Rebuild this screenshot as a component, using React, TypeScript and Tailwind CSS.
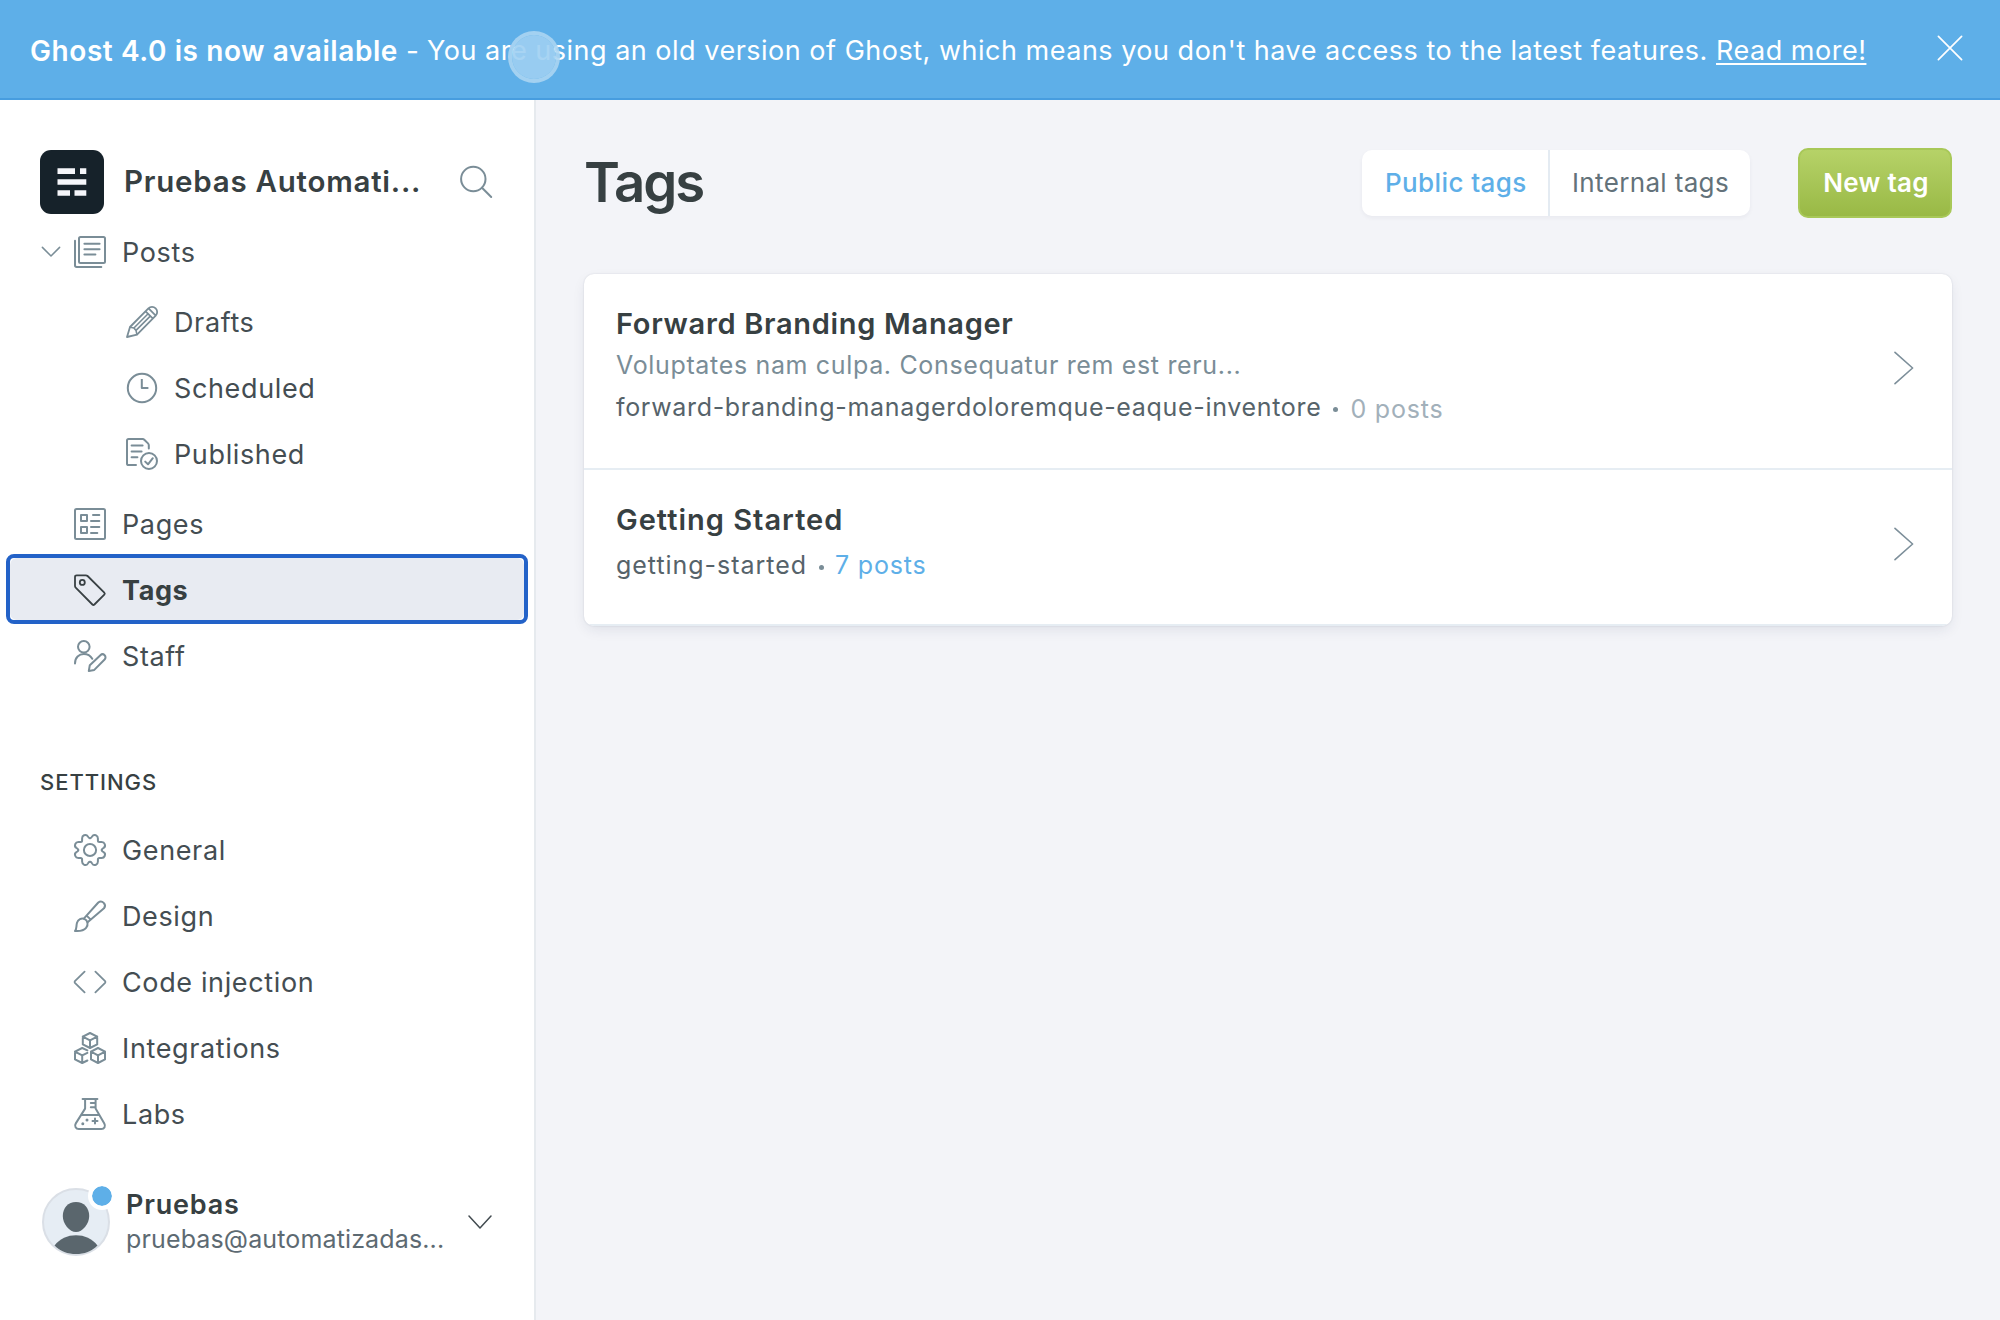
import type { ReactNode } from "react";
import clsx from "clsx";

function Icon({ children, className }: { children: ReactNode; className?: string }) {
  return (
    <svg
      viewBox="0 0 32 32"
      className={clsx("size-8 shrink-0 overflow-visible", className)}
      fill="none"
      stroke="currentColor"
      strokeWidth="2"
      strokeLinecap="round"
      strokeLinejoin="round"
    >
      {children}
    </svg>
  );
}

const gearQuarter =
  "M16 4.3C17.2 4.3 17.7 3.4 18.2 2.4C19 0.9 20.5 0.7 22 1.3C23.6 2 23.9 3 23.9 4.4V6.6Q23.9 8.1 25.4 8.1H27.6C29 8.1 30.1 8.4 30.7 10C31.3 11.5 31.1 13 29.6 13.8C28.6 14.3 27.7 14.8 27.7 16";

const icons = {
  posts: (
    <Icon>
      <rect x="5" y="1" width="26" height="26" rx="1.5" />
      <path d="M1 4.8V29.3Q1 31 2.7 31H27.3M10.4 7.8H25.6M10.4 13.2H25.6M10.4 18.4H21.4" />
    </Icon>
  ),
  drafts: (
    <Icon>
      <path d="M1 31L4 21L22.4 2.4A5 5 0 0 1 29.7 9.6L11 28.6ZM22.8 2.6L29.5 9.3M19.6 5.4L26.7 12.4" strokeWidth="1.8" />
      <path d="M4.2 21.2L7.9 22L10 24.4L10.9 28.4M7.9 22L21.6 8.2M10 24.4L24 10.4" strokeWidth="1.6" />
    </Icon>
  ),
  scheduled: (
    <Icon>
      <circle cx="16" cy="16" r="14.2" />
      <path d="M15.8 7V16H22.4" strokeLinecap="butt" />
    </Icon>
  ),
  published: (
    <Icon>
      <path d="M10 27H2.6Q1 27 1 25.4V2.6Q1 1 2.6 1H16.8Q17.6 1 18.3 1.7L22 5.4Q22.8 6.2 22.8 7.2V10.6M5.6 7.4H16.6M5.6 13.4H15.6M5.6 19.3H11.4" />
      <circle cx="23" cy="23" r="8" />
      <path d="M19.2 23.6L22 26.3L26.8 20.2" />
    </Icon>
  ),
  pages: (
    <Icon>
      <rect x="1" y="1" width="30" height="30" rx="1.5" />
      <path d="M7 7H13V13H7ZM7 19H13V25H7ZM19 7H25.3M17 13H25.3M17 19H25.3M17 25H23.3" />
    </Icon>
  ),
  tags: (
    <Icon className="text-[#394144]">
      <path d="M1 3Q1 1.3 2.7 1.3H11.8Q12.8 1.3 13.6 2L30.3 18.7Q31.3 19.7 30.3 20.7L20.4 30.5Q19.4 31.5 18.4 30.5L1.7 13.7Q1 13 1 12Z" strokeWidth="1.8" />
      <circle cx="8.3" cy="8.4" r="2.5" strokeWidth="1.8" />
    </Icon>
  ),
  staff: (
    <Icon>
      <circle cx="9.8" cy="6.8" r="5.8" />
      <path d="M1 23.4C1 17.4 5 14 9.8 14C13.4 14 16.6 15.9 18.3 18.8M14.8 31L15.8 25.2L26.4 15.2A3 3 0 0 1 30.6 19.5L20.3 29.9Z" />
    </Icon>
  ),
  general: (
    <Icon>
      <path d={gearQuarter} />
      <path d={gearQuarter} transform="rotate(90 16 16)" />
      <path d={gearQuarter} transform="rotate(180 16 16)" />
      <path d={gearQuarter} transform="rotate(270 16 16)" />
      <circle cx="16" cy="16" r="6.1" />
    </Icon>
  ),
  design: (
    <Icon>
      <path d="M1 31C2.9 29 2 26.3 3 22.8C4 19.4 7.5 17.8 10.3 18.9C13.9 20.4 14.6 24.9 12.1 27.9C9.6 30.9 5 31.3 1 31Z" />
      <path d="M9.8 18.6L24.3 2.5A4.1 4.1 0 0 1 30 8.3L13.6 22.2M12.6 15.6L16.8 19.6" />
    </Icon>
  ),
  code: (
    <Icon>
      <path d="M10.6 5.7L0.9 15.1Q0.2 16 0.9 16.9L10.6 26.3M21.4 5.7L31.1 15.1Q31.8 16 31.1 16.9L21.4 26.3" strokeWidth="1.8" />
    </Icon>
  ),
  integrations: (
    <Icon>
      <path d="M16 1L23.2 4.6V12.4L16 16L8.8 12.4V4.6ZM8.8 4.6L16 8.4L23.2 4.6M16 8.4V16" />
      <path d="M13.4 18.3L8.2 16L1 19.6V27.4L8.2 31L13.4 28.5M1 19.6L8.2 23.4L13.4 20.9M8.2 23.4V31" />
      <path d="M24 16L31 19.6V27.4L24 31L17 27.4V19.6ZM17 19.6L24 23.4L31 19.6M24 23.4V31" />
    </Icon>
  ),
  labs: (
    <Icon>
      <path d="M8.6 1H23.4M11.1 1V10.6L1.8 25.4C0.1 28.2 1.9 31 4.8 31H27.4C30.4 31 31.9 28.2 30.3 25.4L21.6 10.6V1M7.6 16.9H25M21.4 5H16.8M21.4 9.2H16.8M21 20.6V25.6M18.5 23.1H23.5" />
      <path d="M13 22V22.02M8.8 25.8V25.82" strokeWidth="3" />
    </Icon>
  ),
};

function NavItem({ icon, label, nested }: { icon: keyof typeof icons; label: string; nested?: boolean }) {
  return (
    <a className={clsx("flex h-[66px] items-center text-[#7a8d97]", nested ? "pl-[126px]" : "pl-[74px]")}>
      {icons[icon]}
      <span className="ml-4 text-[27px] leading-none tracking-[0.63px] text-[#444d52]">{label}</span>
    </a>
  );
}

function ActiveNavItem({ icon, label }: { icon: keyof typeof icons; label: string }) {
  return (
    <a className="mx-1.5 -mt-[3px] -mb-px flex h-[70px] rounded-[8px] border-4 border-[#2362c8] bg-white">
      <span className="flex grow items-center rounded-[7px] bg-[#e8ebf2] pt-0.5 pl-16">
        {icons[icon]}
        <span className="ml-4 text-[27px] font-bold leading-none tracking-[0.6px] text-[#374042]">{label}</span>
      </span>
    </a>
  );
}

function Chevron() {
  return (
    <svg viewBox="0 0 20 34" className="h-[34px] w-5 shrink-0" fill="none" stroke="#7d8f9a" strokeWidth="1.6" strokeLinecap="round" strokeLinejoin="round">
      <path d="M1 1.4L18.6 17L1 32.6" />
    </svg>
  );
}

function Banner() {
  return (
    <header className="relative flex h-[100px] shrink-0 items-center justify-between border-b-2 border-[#479ddf] bg-[#5eafe8] pr-[37px] pl-[30px] text-white">
      <p className="flex pt-[3px] text-[28px] leading-[40px] whitespace-pre">
        <b className="w-[376px] font-semibold tracking-[0.58px]">Ghost 4.0 is now available</b>
        <span className="w-[21px]">-</span>
        <span className="text-[27px] tracking-[0.505px]">
          You are using an old version of Ghost, which means you don't have access to the latest features.{" "}
          <a className="underline decoration-2 underline-offset-[3px]">Read more!</a>
        </span>
      </p>
      <svg viewBox="0 0 26 26" className="mb-0.5 size-[26px]" fill="none" stroke="white" strokeWidth="1.7" strokeLinecap="round">
        <path d="M1.4 1.4L24.6 24.6M24.6 1.4L1.4 24.6" />
      </svg>
      <span className="absolute top-[31px] left-[508px] size-[52px] rounded-full border-4 border-[#abd5f2]/90 bg-[#9fcff2]/90 bg-clip-padding" />
    </header>
  );
}

function Sidebar() {
  return (
    <aside className="flex w-[536px] shrink-0 flex-col border-r-2 border-[#e6eaee] bg-white">
      <div className="mt-[50px] flex h-16 items-center pr-[42px] pl-10">
        <svg viewBox="0 0 64 64" className="size-16 shrink-0">
          <rect width="64" height="64" rx="11" fill="#16222a" />
          <path fill="#f5f6fa" d="M17.5 18.3H35v5.6H17.5zM40 18.3h6.3v5.6H40zM17.5 29.2h28.8v5.6H17.5zM17.5 40.2H30v5.6H17.5zM34.5 40.2h11.8v5.6H34.5z" />
        </svg>
        <h2 className="ml-5 grow pb-0.5 text-[29.5px] font-semibold tracking-[0.75px] whitespace-nowrap text-[#374042]">Pruebas Automati...</h2>
        <Icon className="text-[#7a8d97]">
          <circle cx="13.3" cy="13" r="12.2" />
          <path d="M22 21.8L31.2 31" />
        </Icon>
      </div>

      <nav className="mt-[5px]">
        <div className="flex items-center">
          <svg viewBox="0 0 20 12" className="-mr-[61px] ml-[41px] h-3 w-5 shrink-0" fill="none" stroke="#7a8d97" strokeWidth="1.5" strokeLinecap="round" strokeLinejoin="round">
            <path d="M1.4 1.4L10 10L18.6 1.4" />
          </svg>
          <NavItem icon="posts" label="Posts" />
        </div>
        <div className="my-1">
          <NavItem nested icon="drafts" label="Drafts" />
          <NavItem nested icon="scheduled" label="Scheduled" />
          <NavItem nested icon="published" label="Published" />
        </div>
        <NavItem icon="pages" label="Pages" />
        <ActiveNavItem icon="tags" label="Tags" />
        <NavItem icon="staff" label="Staff" />
      </nav>

      <h3 className="mt-[78px] pl-10 text-[22px] leading-[30px] font-medium tracking-[0.95px] text-[#374042]">SETTINGS</h3>
      <nav className="mt-5">
        <NavItem icon="general" label="General" />
        <NavItem icon="design" label="Design" />
        <NavItem icon="code" label="Code injection" />
        <NavItem icon="integrations" label="Integrations" />
        <NavItem icon="labs" label="Labs" />
      </nav>

      <div className="mt-[41px] flex h-[68px] items-center pl-[42px]">
        <div className="relative size-[68px] shrink-0">
          <svg viewBox="0 0 68 68" className="size-[68px]">
            <circle cx="34" cy="34" r="33" fill="#e6edf4" stroke="#dadfe6" strokeWidth="2" />
            <path d="M34 14C42 14 47.200 20 47.200 28C47.200 36 40.500 44 34 44S20.800 36 20.800 28C20.800 20 26 14 34 14Z" fill="#5a666d" />
            <path d="M12.500 57.500C18 50.500 25.500 47.300 34 47.300S50 50.500 55.500 57.500C50 63.500 42 66 34 66S18 63.500 12.500 57.500Z" fill="#5a666d" />
          </svg>
          <span className="absolute -top-1.5 -right-1.5 size-7 rounded-full border-4 border-white bg-[#5eafe8] bg-clip-padding" />
        </div>
        <div className="ml-4 w-[342px] pb-0.5 whitespace-nowrap">
          <div className="text-[27px] leading-[36px] font-semibold tracking-[0.8px] text-[#374042]">Pruebas</div>
          <div className="-mt-px text-[25px] leading-[34px] tracking-[0.14px] text-[#5d6a72]">pruebas@automatizadas...</div>
        </div>
        <svg viewBox="0 0 24 14" className="h-3.5 w-6" fill="none" stroke="#424b50" strokeWidth="1.5" strokeLinecap="round" strokeLinejoin="round">
          <path d="M1 1L12 13L23 1" />
        </svg>
      </div>
    </aside>
  );
}

export default function App() {
  return (
    <div className="flex h-[1320px] w-[2000px] flex-col overflow-hidden bg-[#f3f4f8] font-['Inter',sans-serif]">
      <Banner />
      <div className="flex grow">
        <Sidebar />
        <main className="grow px-12">
          <div className="mt-12 flex h-[70px] items-center">
            <h1 className="grow pb-px text-[54.5px] leading-none font-semibold tracking-[-2px] text-[#374042]">Tags</h1>
            <div className="flex h-[66px] rounded-[10px] bg-white text-[26px] leading-[66px] shadow-[0_2px_4px_rgba(30,40,80,0.05)]">
              <button className="w-[188px] border-r-2 border-[#e4ebf2] pl-[23px] text-left font-medium tracking-[0.4px] text-[#5eafe8]">Public tags</button>
              <button className="w-[200px] pl-[22px] text-left tracking-[0.35px] text-[#63727a]">Internal tags</button>
            </div>
            <button className="ml-12 h-[70px] w-[154px] rounded-[10px] border-2 border-[#a8c858] bg-linear-to-b from-[#b6d268] to-[#99b945] pb-px pl-0.5 text-center text-[26px] font-semibold tracking-[0.25px] text-white">
              New tag
            </button>
          </div>

          <ul className="mt-14 overflow-hidden rounded-[10px] bg-white text-[25px] shadow-[0_0_2px_rgba(30,40,80,0.14),0_5px_14px_-2px_rgba(30,40,80,0.1)]">
            <li className="flex h-[196px] justify-between border-b-2 border-[#e6edf3] pr-[38px] pl-8">
              <div className="pt-[30px]">
                <h3 className="text-[29px] leading-10 font-semibold tracking-[0.69px] text-[#374042]">Forward Branding Manager</h3>
                <p className="leading-[42px] tracking-[0.66px] text-[#7a8d97]">Voluptates nam culpa. Consequatur rem est reru...</p>
                <p className="flex leading-[42px] tracking-[0.68px] text-[#56636a]">
                  forward-branding-managerdoloremque-eaque-inventore
                  <span className="mx-3 mt-[21px] size-[5px] rounded-full bg-[#7a8d97]" />
                  <span className="pt-0.5 tracking-[0.8px] text-[#a2b0ba]">0 posts</span>
                </p>
              </div>
              <div className="pt-[77px]">
                <Chevron />
              </div>
            </li>
            <li className="flex h-[156px] justify-between border-b-2 border-[#e6edf3] pr-[38px] pl-8">
              <div className="pt-[30px]">
                <h3 className="text-[29px] leading-10 font-semibold tracking-[1px] text-[#374042]">Getting Started</h3>
                <p className="mt-1 flex leading-[42px] tracking-[0.97px] text-[#56636a]">
                  getting-started
                  <span className="mr-[11px] ml-3 mt-[21px] size-[5px] rounded-full bg-[#7a8d97]" />
                  <span className="tracking-[0.8px] text-[#5eafe8]">7 posts</span>
                </p>
              </div>
              <div className="pt-[57px]">
                <Chevron />
              </div>
            </li>
          </ul>
        </main>
      </div>
    </div>
  );
}
